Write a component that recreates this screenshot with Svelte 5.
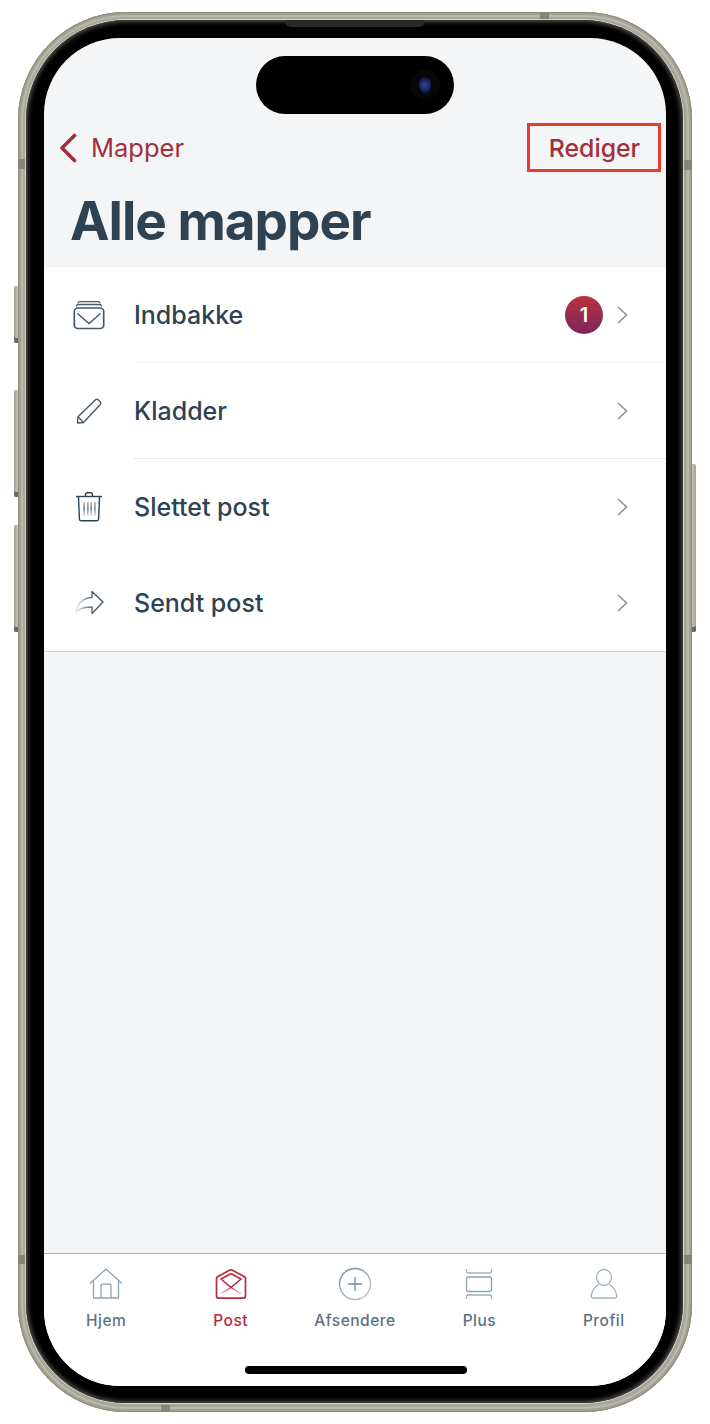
<script>
  const rows = [
    { id: 'inbox', label: 'Indbakke', badge: 1, line: 'faint' },
    { id: 'pen', label: 'Kladder', line: 'mid' },
    { id: 'trash', label: 'Slettet post', line: 'none' },
    { id: 'send', label: 'Sendt post', line: 'none' }
  ];
  const tabs = [
    { id: 'home', label: 'Hjem' },
    { id: 'post', label: 'Post', active: true },
    { id: 'add', label: 'Afsendere' },
    { id: 'plus', label: 'Plus' },
    { id: 'profile', label: 'Profil' }
  ];
</script>

<div class="page">
  <div class="phone">
    <span class="btn l1"></span>
    <span class="btn l2"></span>
    <span class="btn l3"></span>
    <span class="btn r1"></span>
    <span class="band top"></span>
    <span class="band bottom"></span>
    <span class="band left-a"></span>
    <span class="band left-b"></span>
    <span class="band right-a"></span>
    <span class="band right-b"></span>
    <div class="bezel">
      <span class="speaker"></span>
      <div class="screen">
        <div class="island"><span class="camera"><span class="lens"></span></span></div>
        <header class="head">
          <nav class="nav">
            <button class="back">
              <svg class="back-ico" viewBox="0 0 18 30" aria-hidden="true"><path d="M15.500 2.500 3 15l12.500 12.500" /></svg>
              <span>Mapper</span>
            </button>
            <button class="edit">Rediger</button>
          </nav>
          <h1>Alle mapper</h1>
        </header>

        <ul class="list">
          {#each rows as r}
            <li class="row">
              <span class="ico">
                {#if r.id === 'inbox'}
                  <svg viewBox="0 0 32 30" width="32" height="30" aria-hidden="true">
                    <g fill="none" stroke="#46596a">
                      <rect x="1.300" y="8" width="29.400" height="20.500" rx="3.500" stroke-width="1.700" />
                      <path d="M4.500 13.500 16 23.500l11.500-10" stroke-width="1.500" />
                      <path d="M3.500 6.500c0-1.300.8-2 2-2h21c1.200 0 2 .7 2 2" stroke-width="1.300" />
                      <path d="M5 3.200c0-1 .7-1.600 1.700-1.600h18.600c1 0 1.700.6 1.700 1.600" stroke-width="1.300" />
                    </g>
                  </svg>
                {:else if r.id === 'pen'}
                  <svg viewBox="0 0 28 28" width="28" height="28" aria-hidden="true">
                    <path d="M2.500 26 3 19.800 20.500 2.800c.8-.8 1.900-.8 2.700 0l2.100 2.100c.7.8.7 1.800 0 2.600L8.500 25.500z M3 19.800l5.500 5.700" fill="none" stroke="#46596a" stroke-width="1.400" stroke-linejoin="round" />
                  </svg>
                {:else if r.id === 'trash'}
                  <svg viewBox="0 0 28 32" width="28" height="32" aria-hidden="true">
                    <defs>
                      <linearGradient id="tb" x1="0" y1="0" x2="0" y2="1"><stop offset="0" stop-color="#8a98a3" /><stop offset=".5" stop-color="#46596a" /><stop offset="1" stop-color="#46596a" stop-opacity=".2" /></linearGradient>
                    </defs>
                    <g fill="none" stroke="#2e4150" stroke-width="1.400">
                      <path d="M1 5.500h26" />
                      <path d="M10.500 5V3.500c0-1 .7-1.800 1.800-1.800h3.400c1.100 0 1.800.8 1.800 1.800V5" />
                      <path d="M3.500 6 4.400 28c0 1 .7 1.700 1.700 1.700h15.800c1 0 1.700-.7 1.700-1.700l.9-22" />
                    </g>
                    <rect x="8.500" y="11" width="1.200" height="14" fill="url(#tb)" />
                    <rect x="12.300" y="11" width="1.200" height="14" fill="url(#tb)" />
                    <rect x="15.500" y="11" width="1.200" height="14" fill="url(#tb)" />
                    <rect x="19.300" y="11" width="1.200" height="14" fill="url(#tb)" />
                  </svg>
                {:else}
                  <svg viewBox="0 0 30 26" width="30" height="26" aria-hidden="true">
                    <defs>
                      <linearGradient id="sg" gradientUnits="userSpaceOnUse" x1="1" y1="0" x2="20" y2="0"><stop offset="0" stop-color="#46596a" stop-opacity=".08" /><stop offset="1" stop-color="#46596a" /></linearGradient>
                    </defs>
                    <path d="M1.500 22C3.500 13 10 7.500 18 7.500V1.500L29 12 18 23.500V17C11 17 5.500 18 1.500 22Z" fill="none" stroke="url(#sg)" stroke-width="1.400" stroke-linejoin="round" />
                  </svg>
                {/if}
              </span>
              <span class="body {r.line}">
                <span class="label">{r.label}</span>
                {#if r.badge}<span class="badge">{r.badge}</span>{/if}
                <svg class="chev" viewBox="0 0 11 18" width="11" height="18" aria-hidden="true"><path d="M1 1l8.500 8L1 17" /></svg>
              </span>
            </li>
          {/each}
        </ul>

        <div class="spacer"></div>

        <footer class="tabs">
          {#each tabs as t}
            <div class="tab" class:active={t.active}>
              <span class="tab-ico">
                {#if t.id === 'home'}
                  <svg viewBox="0 0 34 32" width="34" height="32" aria-hidden="true">
                    <path d="M1 15.500 17 1l16 14.500M4.500 12.500V30h25V12.500M12 30V17.500c0-.8.5-1.300 1.300-1.300h7.400c.8 0 1.300.5 1.300 1.300V30" fill="none" stroke="#8ba3b3" stroke-width="1.300" stroke-linejoin="round" />
                  </svg>
                {:else if t.id === 'post'}
                  <svg viewBox="0 0 32 32" width="32" height="32" aria-hidden="true">
                    <defs>
                      <linearGradient id="pg" gradientUnits="userSpaceOnUse" x1="0" y1="19" x2="0" y2="27"><stop offset="0" stop-color="#b7293f" /><stop offset="1" stop-color="#b7293f" stop-opacity=".12" /></linearGradient>
                    </defs>
                    <g fill="none" stroke="#b7293f" stroke-linejoin="round">
                      <path d="M1.500 10.500c0-.8.300-1.400 1-1.800L15 2c.7-.3 1.300-.3 2 0l12.500 6.700c.7.400 1 1 1 1.800v17.600c0 1.200-.8 2-2 2h-25c-1.200 0-2-.8-2-2z" stroke-width="1.700" />
                      <path d="M6 11 15.300 6c.5-.2.900-.2 1.400 0L26 11l-10 8.500z" stroke-width="1.600" />
                    </g>
                    <path d="M5.500 26 16 19.500 26.500 26" fill="none" stroke="url(#pg)" stroke-width="1.300" />
                  </svg>
                {:else if t.id === 'add'}
                  <svg viewBox="0 0 34 34" width="34" height="34" aria-hidden="true">
                    <defs>
                      <linearGradient id="ag" x1="0" y1="0" x2="1" y2="1"><stop offset="0" stop-color="#6f8a9b" /><stop offset="1" stop-color="#bccbd5" /></linearGradient>
                    </defs>
                    <circle cx="17" cy="17" r="15.500" fill="none" stroke="url(#ag)" stroke-width="1.300" />
                    <path d="M17 10v14M10 17h14" fill="none" stroke="#6f8a9b" stroke-width="1.300" />
                  </svg>
                {:else if t.id === 'plus'}
                  <svg viewBox="0 0 28 32" width="28" height="32" aria-hidden="true">
                    <g fill="none" stroke="#9db1bd" stroke-width="1.300">
                      <path d="M1.500 1v2.500c0 1 .6 1.500 1.500 1.500h22c.9 0 1.500-.5 1.500-1.500V1" />
                      <rect x="1.500" y="9" width="25" height="14.500" rx="1.800" stroke="#8ba3b3" />
                      <path d="M1.500 31v-2.500c0-1 .6-1.500 1.500-1.500h22c.9 0 1.500.5 1.500 1.500V31" />
                    </g>
                  </svg>
                {:else}
                  <svg viewBox="0 0 28 32" width="28" height="32" aria-hidden="true">
                    <g fill="none" stroke="#a0b3bf" stroke-width="1.300">
                      <ellipse cx="14" cy="9.500" rx="7.500" ry="8" />
                      <path d="M9 16.500C4.500 18.500 2 23 1.200 28c-.2 1.100.6 2 1.800 2h22c1.200 0 2-.9 1.800-2-.8-5-3.300-9.500-7.800-11.500" />
                    </g>
                  </svg>
                {/if}
              </span>
              <span class="tab-label">{t.label}</span>
            </div>
          {/each}
        </footer>
        <div class="home-zone"><span class="home-bar"></span></div>
      </div>
    </div>
  </div>
</div>

<style>
  :global(body) { margin: 0; background: #fff; }
  .page {
    width: 710px;
    height: 1424px;
    padding: 12px 18px;
    box-sizing: border-box;
    font-family: Inter, "Liberation Sans", sans-serif;
    overflow: hidden;
  }
  .phone {
    position: relative;
    width: 674px;
    height: 1400px;
    padding: 8px 9px 9px 8px;
    box-sizing: border-box;
    border-radius: 108px;
    background: #a9a79a;
    box-shadow: inset 0 0 0 1px #8f8d7e, inset 0 0 0 3px #a3a194, inset 0 0 0 5px #bbb9ad;
  }
  .bezel {
    position: relative;
    height: 100%;
    padding: 18px 17px 17px 18px;
    box-sizing: border-box;
    background: #000;
    border-radius: 100px;
    box-shadow: inset 0 0 4px 2px #4c4c4c, 0 0 0 1px #d3d2cb;
  }
  .speaker {
    position: absolute;
    top: 0;
    left: 259px;
    width: 140px;
    height: 7px;
    background: #2a2a2a;
    border-radius: 0 0 6px 6px;
  }
  .screen {
    position: relative;
    height: 100%;
    width: 622px;
    background: #f3f5f7;
    border-radius: 76px;
    overflow: hidden;
    display: flex;
    flex-direction: column;
  }
  .btn {
    position: absolute;
    width: 4px;
    background: linear-gradient(90deg, #a5a294, #c6c4b8);
    border-radius: 2px 0 0 2px;
    box-shadow: inset 0 -5px 0 #6c6a60;
  }
  .l1 { left: -4px; top: 274px; height: 57px; }
  .l2 { left: -4px; top: 378px; height: 107px; }
  .l3 { left: -4px; top: 513px; height: 107px; }
  .r1 { right: -4px; top: 452px; height: 168px; border-radius: 0 2px 2px 0; background: linear-gradient(270deg, #a5a294, #c6c4b8); }
  .band { position: absolute; background: #85837a; z-index: 1; }
  .band.top { top: 0; left: 522px; width: 9px; height: 7px; }
  .band.bottom { bottom: 0; left: 143px; width: 9px; height: 7px; }
  .band.left-a { left: 0; top: 147px; width: 7px; height: 10px; }
  .band.left-b { left: 0; top: 1243px; width: 7px; height: 9px; }
  .band.right-a { right: 0; top: 148px; width: 8px; height: 10px; }
  .band.right-b { right: 0; top: 1243px; width: 8px; height: 9px; }

  .island {
    position: absolute;
    left: 212px;
    top: 18px;
    width: 198px;
    height: 58px;
    background: #000;
    border-radius: 29px;
  }
  .camera {
    position: absolute;
    right: 14px;
    top: 14px;
    width: 30px;
    height: 30px;
    border-radius: 50%;
    background: #07070b;
    display: grid;
    place-items: center;
  }
  .lens {
    width: 12px;
    height: 16px;
    border-radius: 50%;
    background: radial-gradient(circle, #2f4a86 0, #1c2460 50%, #0a0c22 100%);
  }

  .head {
    height: 228px;
    padding-top: 85px;
    box-sizing: border-box;
    flex: none;
  }
  .nav {
    display: flex;
    justify-content: space-between;
    align-items: center;
    height: 49px;
    padding-left: 15px;
    padding-right: 5px;
  }
  button {
    background: none;
    border: 0;
    padding: 0;
    font: inherit;
    color: #a1303a;
    font-size: 25.500px;
    line-height: 1;
  }
  .back { display: flex; align-items: center; gap: 14px; }
  .back-ico {
    width: 18px;
    height: 30px;
    fill: none;
    stroke: #a1303a;
    stroke-width: 3.600;
    stroke-linecap: round;
    stroke-linejoin: round;
  }
  .edit {
    width: 134px;
    height: 49px;
    box-sizing: border-box;
    border: 3px solid #ee3a2c;
    font-weight: 450;
    font-size: 24.800px;
    padding: 2px 0 0 1px;
  }
  h1 {
    margin: 0;
    padding-left: 26px;
    margin-top: 19px;
    font-size: 53px;
    line-height: 60px;
    font-weight: 700;
    letter-spacing: -1px;
    color: #2e4252;
  }

  .list {
    list-style: none;
    margin: 0;
    padding: 0;
    background: #fff;
    border-top: 1px solid #eff1f3;
    border-bottom: 1px solid #cdd1d6;
    flex: none;
  }
  .row { display: flex; height: 96px; }
  .ico {
    width: 90px;
    flex: none;
    display: flex;
    align-items: center;
    justify-content: center;
    padding-right: 1px;
    box-sizing: border-box;
  }
  .ico svg { display: block; }
  .body {
    flex: 1;
    display: flex;
    align-items: center;
    padding-right: 38px;
    box-sizing: border-box;
    border-bottom: 1px solid transparent;
  }
  .body.faint { border-bottom-color: #f4f5f6; }
  .body.mid { border-bottom-color: #e6e8ea; }
  .label {
    flex: 1;
    font-size: 25px;
    font-weight: 500;
    color: #2e4252;
  }
  .badge {
    width: 38px;
    height: 38px;
    margin-right: 14px;
    border-radius: 50%;
    background: linear-gradient(180deg, #b5333a, #7e2461);
    color: #fff;
    font-size: 20px;
    font-weight: 600;
    display: grid;
    place-items: center;
  }
  .chev { fill: none; stroke: #8199a8; stroke-width: 1.700; flex: none; }

  .spacer { flex: 1; }

  .tabs {
    flex: none;
    height: 86px;
    display: grid;
    grid-template-columns: repeat(5, 1fr);
    background: #fff;
    border-top: 1px solid #a9afb5;
  }
  .tab {
    display: flex;
    flex-direction: column;
    align-items: center;
  }
  .tab-ico {
    height: 32px;
    margin-top: 14px;
    display: flex;
    align-items: center;
    justify-content: center;
  }
  .tab-ico svg { display: block; }
  .tab-label {
    margin-top: 11px;
    font-size: 15.500px;
    line-height: 20px;
    font-weight: 500;
    letter-spacing: .5px;
    color: #5d7282;
  }
  .tab.active .tab-label { color: #b7293f; }
  .home-zone {
    flex: none;
    height: 46px;
    background: #fff;
    display: flex;
    justify-content: center;
    padding: 26px 0 0 2px;
    box-sizing: border-box;
  }
  .home-bar {
    width: 222px;
    height: 8px;
    border-radius: 4px;
    background: #000;
  }
</style>
